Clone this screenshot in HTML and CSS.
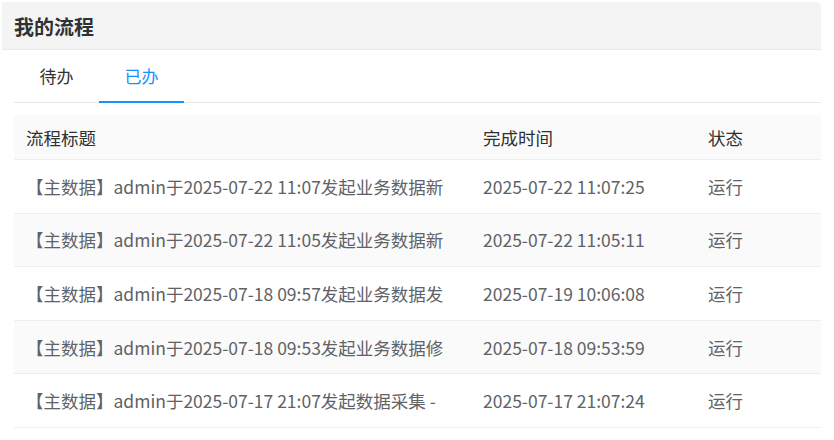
FILE: index.html
```html
<!DOCTYPE html>
<html lang="zh-CN">
  <head>
    <meta charset="UTF-8" />
    <meta name="viewport" content="width=device-width, initial-scale=1.0" />
    <title>我的流程</title>
    <link rel="stylesheet" href="styles.css">
  </head>
  <body>
    <div class="card">
      <div class="card-header">我的流程</div>
      <div class="card-body">
        <div class="tabs">
          <span class="tab">待办</span>
          <span class="tab active">已办</span>
        </div>
        <table class="flow-table">
          <thead>
            <tr>
              <th class="col-title">流程标题</th>
              <th class="col-time">完成时间</th>
              <th>状态</th>
            </tr>
          </thead>
          <tbody>
            <tr>
              <td>【主数据】admin于2025-07-22 11:07发起业务数据新</td>
              <td>2025-07-22 11:07:25</td>
              <td>运行</td>
            </tr>
            <tr>
              <td>【主数据】admin于2025-07-22 11:05发起业务数据新</td>
              <td>2025-07-22 11:05:11</td>
              <td>运行</td>
            </tr>
            <tr>
              <td>【主数据】admin于2025-07-18 09:57发起业务数据发</td>
              <td>2025-07-19 10:06:08</td>
              <td>运行</td>
            </tr>
            <tr>
              <td>【主数据】admin于2025-07-18 09:53发起业务数据修</td>
              <td>2025-07-18 09:53:59</td>
              <td>运行</td>
            </tr>
            <tr>
              <td>【主数据】admin于2025-07-17 21:07发起数据采集 -</td>
              <td>2025-07-17 21:07:24</td>
              <td>运行</td>
            </tr>
          </tbody>
        </table>
      </div>
    </div>
  </body>
</html>
```

FILE: styles.css
```css
body {
  font-family: "Noto Sans CJK SC", "Noto Sans", sans-serif;
  background-color: #ffffff;
  margin: 0;
  padding: 2px 13px 0 2px;
}
.card {
  background-color: white;
  border-radius: 0 5px 0 0;
}
.card-header {
  background-color: #f4f4f5;
  border-bottom: 1px solid #e3ebf5;
  border-radius: 0 5px 0 0;
  height: 47px;
  line-height: 50px;
  padding-left: 12px;
  font-size: 20px;
  font-weight: bold;
  color: #303133;
}
.card-body {
  padding: 0 0 0 12px;
}
.tabs {
  display: flex;
  height: 52px;
  border-bottom: 1px solid #e4e7ed;
}
.tab {
  width: 85px;
  box-sizing: border-box;
  text-align: center;
  line-height: 52px;
  font-size: 17px;
  color: #303133;
}
.tab.active {
  color: #1890ff;
  border-bottom: 2px solid #1890ff;
  margin-bottom: -1px;
}
.flow-table {
  width: 100%;
  margin-top: 12px;
  border-collapse: collapse;
  table-layout: fixed;
  font-size: 17.5px;
}
.flow-table th,
.flow-table td {
  text-align: left;
  padding: 0 12px;
  border-bottom: 1px solid #ebeef5;
  white-space: nowrap;
  overflow: hidden;
}
.flow-table th {
  height: 44px;
  background-color: #fafafa;
  font-weight: normal;
  color: #303133;
}
.flow-table td {
  height: 52.6px;
  color: #606266;
}
.flow-table tbody tr:nth-child(even) td {
  background-color: #fafafa;
}
.col-title {
  width: 433px;
}
.col-time {
  width: 201px;
}
```
